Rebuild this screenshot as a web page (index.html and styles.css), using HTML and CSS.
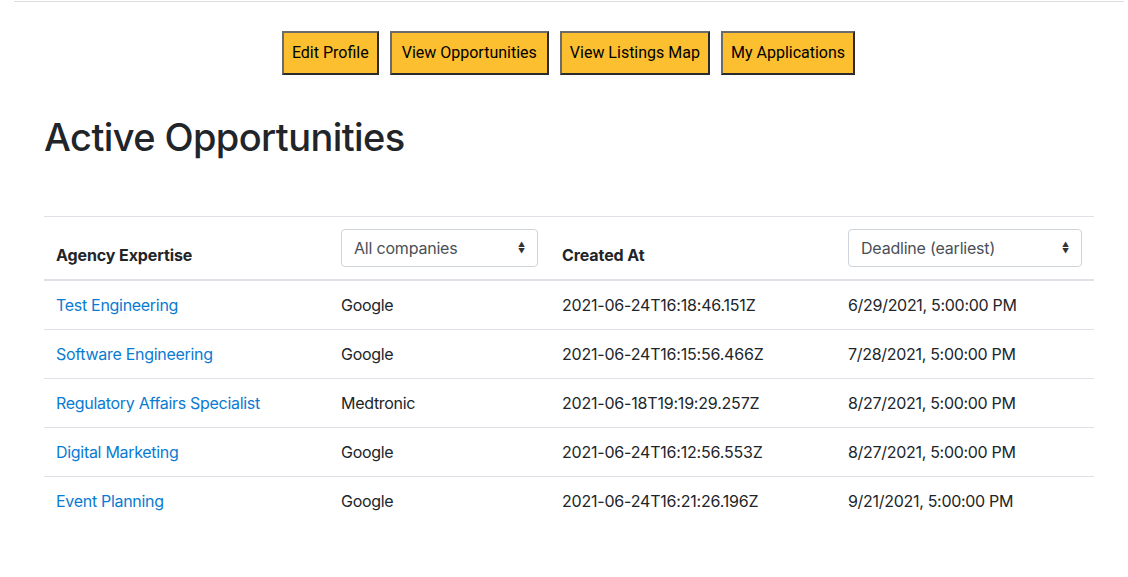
FILE: index.html
```html
<!DOCTYPE html>
<html lang="en">
<head>
<meta charset="utf-8">
<title>Active Opportunities</title>
<link rel="stylesheet" href="styles.css">
</head>
<body>
<hr class="top-rule">
<nav class="actions">
  <button class="action-btn">Edit Profile</button>
  <button class="action-btn">View Opportunities</button>
  <button class="action-btn">View Listings Map</button>
  <button class="action-btn">My Applications</button>
</nav>
<main class="content">
  <h1 class="page-title">Active Opportunities</h1>
  <table class="opps">
    <colgroup>
      <col class="c1"><col class="c2"><col class="c3"><col class="c4">
    </colgroup>
    <thead>
      <tr>
        <th>Agency Expertise</th>
        <th><div class="select"><span>All companies</span><span class="caret">&#9650;<br>&#9660;</span></div></th>
        <th>Created At</th>
        <th><div class="select"><span>Deadline (earliest)</span><span class="caret">&#9650;<br>&#9660;</span></div></th>
      </tr>
    </thead>
    <tbody>
      <tr><td><a href="#">Test Engineering</a></td><td>Google</td><td class="stamp">2021-06-24T16:18:46.151Z</td><td>6/29/2021, 5:00:00 PM</td></tr>
      <tr><td><a href="#">Software Engineering</a></td><td>Google</td><td class="stamp">2021-06-24T16:15:56.466Z</td><td>7/28/2021, 5:00:00 PM</td></tr>
      <tr><td><a href="#">Regulatory Affairs Specialist</a></td><td>Medtronic</td><td class="stamp">2021-06-18T19:19:29.257Z</td><td>8/27/2021, 5:00:00 PM</td></tr>
      <tr><td><a href="#">Digital Marketing</a></td><td>Google</td><td class="stamp">2021-06-24T16:12:56.553Z</td><td>8/27/2021, 5:00:00 PM</td></tr>
      <tr><td><a href="#">Event Planning</a></td><td>Google</td><td class="stamp">2021-06-24T16:21:26.196Z</td><td>9/21/2021, 5:00:00 PM</td></tr>
    </tbody>
  </table>
</main>
</body>
</html>
```

FILE: styles.css
```css
html, body {
  margin: 0;
  padding: 0;
  background: #fff;
}
body {
  font-family: Inter, "Noto Sans", sans-serif;
  font-size: 16px;
  color: #212529;
}
.top-rule {
  margin: 1px 4px 0 14px;
  border: 0;
  border-top: 1px solid #dedede;
  height: 0;
}
.actions {
  display: flex;
  justify-content: center;
  gap: 11px;
  padding-left: 9px;
  margin-top: 29px;
}
.action-btn {
  font-family: Roboto, sans-serif;
  font-size: 16px;
  color: #000;
  background: #fcbf2f;
  border: 2px solid;
  border-color: #6b6b6b #2b2b2b #2b2b2b #6b6b6b;
  padding: 10px 8px;
  height: 44px;
  line-height: 20px;
  cursor: pointer;
}
.action-btn:nth-child(2) { padding: 10px 10px; }
.content {
  padding: 0 34px 0 44px;
}
.page-title {
  font-size: 38px;
  font-weight: 500;
  line-height: 48px;
  margin: 38px 0 0 0;
  letter-spacing: -0.6px;
}
.opps {
  width: 1050px;
  margin-top: 55px;
  border-collapse: collapse;
  table-layout: fixed;
  letter-spacing: -0.3px;
}
.c1 { width: 285px; }
.c2 { width: 221px; }
.c3 { width: 286px; }
.c4 { width: 258px; }
.opps th, .opps td {
  padding: 12px;
  text-align: left;
  border-top: 1px solid #dee2e6;
  line-height: 24px;
}
.opps td.stamp {
  letter-spacing: -0.2px;
}
.opps th {
  font-weight: 700;
  vertical-align: bottom;
  border-bottom: 2px solid #dee2e6;
  letter-spacing: -0.1px;
}
.opps a {
  color: #0a7bd2;
  text-decoration: none;
}
.select {
  display: flex;
  align-items: center;
  justify-content: space-between;
  height: 38px;
  box-sizing: border-box;
  border: 1px solid #ced4da;
  border-radius: 4px;
  padding: 0 12px;
  font-weight: 400;
  color: #495057;
  letter-spacing: -0.2px;
}
.caret {
  font-size: 7px;
  line-height: 7px;
  color: #333;
  text-align: center;
}
```
